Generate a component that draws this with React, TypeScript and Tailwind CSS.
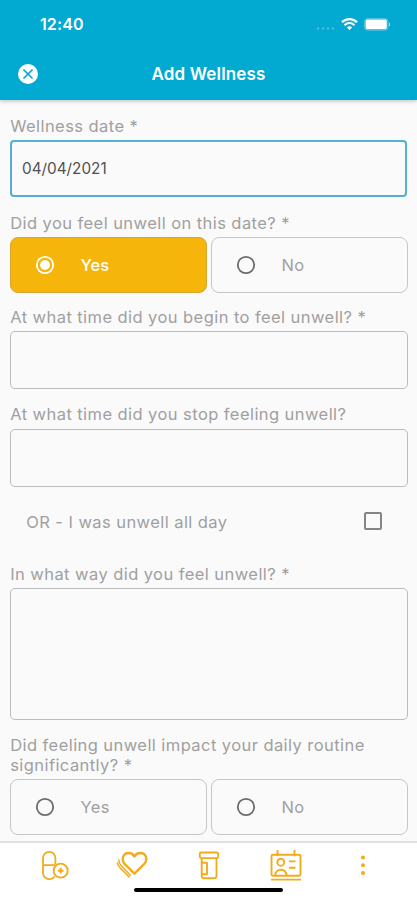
import React from 'react';

interface OptionProps {
  label: string;
  selected?: boolean;
}

const Option: React.FC<OptionProps> = ({ label, selected }) => (
  <button
    type="button"
    role="radio"
    aria-checked={!!selected}
    className={
      selected
        ? 'flex h-14 flex-1 items-center rounded-lg border border-[#d6a62e] bg-[#f6b50b] pl-6 text-white'
        : 'flex h-14 flex-1 items-center rounded-lg border border-[#c6c6c6] pl-6 text-[#a0a0a0]'
    }
  >
    <svg className={selected ? 'h-5 w-5 text-white' : 'h-5 w-5 text-[#6c6c6c]'} viewBox="0 0 20 20" fill="none">
      <circle cx="10" cy="10" r="8.2" stroke="currentColor" strokeWidth="1.8" />
      {selected && <circle cx="10" cy="10" r="4.9" fill="currentColor" />}
    </svg>
    <span
      className={
        selected
          ? 'ml-[26px] pt-px text-[16.5px] font-medium'
          : 'ml-[26px] pt-px text-[16.5px] tracking-[0.3px]'
      }
    >
      {label}
    </span>
  </button>
);

const YesNo: React.FC<{ value?: 'Yes' | 'No' }> = ({ value }) => (
  <div role="radiogroup" className="flex gap-1">
    <Option label="Yes" selected={value === 'Yes'} />
    <Option label="No" selected={value === 'No'} />
  </div>
);

const Header: React.FC = () => (
  <header className="relative h-[100px] shrink-0 bg-[#02a9d1] text-white shadow-[0_1px_4px_rgba(0,0,0,0.25)]">
    <div className="flex h-12 items-center justify-between pr-[26px] pl-[40px]">
      <span className="text-[16px] font-semibold tracking-[0.1px]">12:40</span>
      <div className="flex items-center">
        <svg className="mt-2 h-[3px] w-5" viewBox="0 0 20 3" fill="#4fc0dc">
          <circle cx="2" cy="1.5" r="1.2" />
          <circle cx="7" cy="1.5" r="1.2" />
          <circle cx="12" cy="1.5" r="1.2" />
          <circle cx="17" cy="1.5" r="1.2" />
        </svg>
        <svg className="ml-[5px] h-[13px] w-[17px]" viewBox="0 0 17 13" fill="none" stroke="currentColor">
          <path d="M1 4.2a10.8 10.8 0 0 1 15 0" strokeWidth="2.4" />
          <path d="M3.5 7.2a7 7 0 0 1 10 0" strokeWidth="2" />
          <path d="M5.9 9.3a4 4 0 0 1 5.2 0L8.5 12.2z" fill="currentColor" stroke="none" />
        </svg>
        <svg className="ml-[6px] h-[13px] w-[27px]" viewBox="0 0 27 13" fill="none">
          <rect x="0.6" y="0.6" width="23.4" height="11.6" rx="3" stroke="#5cc6e0" />
          <rect x="1.6" y="1.6" width="21.2" height="9.6" rx="1.4" fill="currentColor" />
          <path d="M25 4.4c1.5.6 1.5 3.4 0 4z" fill="#a8e1ef" />
        </svg>
      </div>
    </div>
    <div className="grid h-[52px] grid-cols-[48px_1fr_48px] items-center">
      <button type="button" aria-label="Close" className="flex pl-[18px]">
        <svg className="h-5 w-5" viewBox="0 0 20 20">
          <circle cx="10" cy="10" r="10" fill="#fff" />
          <path d="M6 6l8 8M14 6l-8 8" stroke="#02a9d1" strokeWidth="1.7" strokeLinecap="round" />
        </svg>
      </button>
      <h1 className="pt-px text-center text-[17px] font-semibold tracking-[0.15px]">Add Wellness</h1>
    </div>
  </header>
);

const iconClass = 'h-8 w-8';

const NavBar: React.FC = () => (
  <nav className="flex h-[59px] shrink-0 flex-col items-center border-t-2 border-[#e0e0e0] bg-white">
    <div className="grid h-[45px] w-full grid-cols-5 justify-items-center px-4 pt-[7px] text-[#f1ab1c]">
      {/* Medication */}
      <svg className={iconClass} viewBox="0 0 32 32" fill="none" stroke="currentColor" strokeWidth="1.8">
        <path d="M15.6 26.4A6.4 6.4 0 0 1 4 23V8a6.2 6.2 0 0 1 12.4 0v6.2M4 15.2h12.4" />
        <circle cx="21.7" cy="20.7" r="7" />
        <path d="M21.7 17.8v5.8M18.8 20.7h5.8" strokeWidth="2" />
      </svg>
      {/* Wellness */}
      <svg className={iconClass} viewBox="0 0 32 32" fill="none" stroke="currentColor" strokeWidth="2.3" strokeLinejoin="round">
        <path d="M18.4 23.6L8.4 13.6C4.8 9 7.4 3 12.6 3c2.7 0 4.6 1.4 5.8 3.6C19.6 4.4 21.7 3 24.4 3c5 0 8 5.8 4.2 10.6z" />
        <path d="M2.8 9.4c-.2 2.6.8 4.7 2.6 6.7l9.4 9.7" strokeWidth="1.5" />
        <path d="M1.2 12.4c.3 1.9 1.1 3.6 2.6 5.2l9.8 9.9" strokeWidth="1.5" />
      </svg>
      {/* Prescriptions */}
      <svg className={iconClass} viewBox="0 0 32 32" fill="none" stroke="currentColor" strokeWidth="1.9" strokeLinejoin="round">
        <rect x="6.8" y="2.5" width="18.4" height="5.6" rx="1.5" />
        <path d="M8.7 8v18a2.2 2.2 0 0 0 2.2 2.2h10.4a2.2 2.2 0 0 0 2.2-2.2V8M9 12.7h5v11.6H9" />
      </svg>
      {/* Appointments */}
      <svg className={iconClass} viewBox="0 0 32 32" fill="none" stroke="currentColor" strokeWidth="1.9">
        <rect x="1.5" y="4.8" width="29" height="21" rx="1.5" />
        <path d="M7.5 0v6.2M24.5 0v6.2M1 29.6h30" />
        <circle cx="10.8" cy="12.2" r="3.5" />
        <path d="M5.2 25.6c0-7.8 11.4-7.8 11.4 0M19 11.4h6.5M19 17.7h6.5" />
      </svg>
      {/* More */}
      <svg className={iconClass} viewBox="0 0 32 32" fill="currentColor">
        <circle cx="16" cy="7.5" r="2" />
        <circle cx="16" cy="15.3" r="2" />
        <circle cx="16" cy="23" r="2" />
      </svg>
    </div>
    <div className="h-1 w-[149px] rounded-full bg-black" />
  </nav>
);

const labelClass = 'block pl-[0.7px] text-[16.5px] leading-5 tracking-[0.43px]';
const fieldClass = 'block w-full rounded-[5px] border border-[#bcbcbc] bg-transparent outline-none';

const App: React.FC = () => {
  return (
    <div className="flex h-[900px] w-[417px] flex-col overflow-hidden bg-[#fafafa] font-[Inter,sans-serif] text-[#a0a0a0]">
      <Header />
      <main className="flex-1 overflow-hidden px-[9.5px] pt-4">
        <label className={labelClass}>Wellness date *</label>
        <div className="mt-1 h-[57px] px-[0.5px]">
          <input
            type="text"
            defaultValue="04/04/2021"
            className="block h-full w-full rounded-[4px] border-2 border-[#50b1d0] px-[10px] text-[15.3px] text-[#505050] outline-none"
          />
        </div>

        <div className="mt-4 mb-1">
          <label className={labelClass}>Did you feel unwell on this date? *</label>
        </div>
        <YesNo value="Yes" />

        <div className="mt-[14px] mb-1">
          <label className={labelClass}>At what time did you begin to feel unwell? *</label>
        </div>
        <input type="text" className={`${fieldClass} h-[58px]`} />

        <div className="mt-[15px] mb-[5px]">
          <label className={labelClass}>At what time did you stop feeling unwell?</label>
        </div>
        <input type="text" className={`${fieldClass} h-[58px]`} />

        <div className="flex h-[70px] items-center justify-between pr-[26px] pl-4">
          <span className={labelClass}>OR - I was unwell all day</span>
          <span className="mb-0.5 h-[18px] w-[18px] rounded-[2px] border-2 border-[#858585]" />
        </div>

        <div className="mt-[7px] mb-1">
          <label className={labelClass}>In what way did you feel unwell? *</label>
        </div>
        <textarea className={`${fieldClass} h-[132px] resize-none`} />

        <div className="mt-[15px] mb-1">
          <label className={labelClass}>Did feeling unwell impact your daily routine significantly? *</label>
        </div>
        <YesNo />
      </main>
      <NavBar />
    </div>
  );
};

export default App;
